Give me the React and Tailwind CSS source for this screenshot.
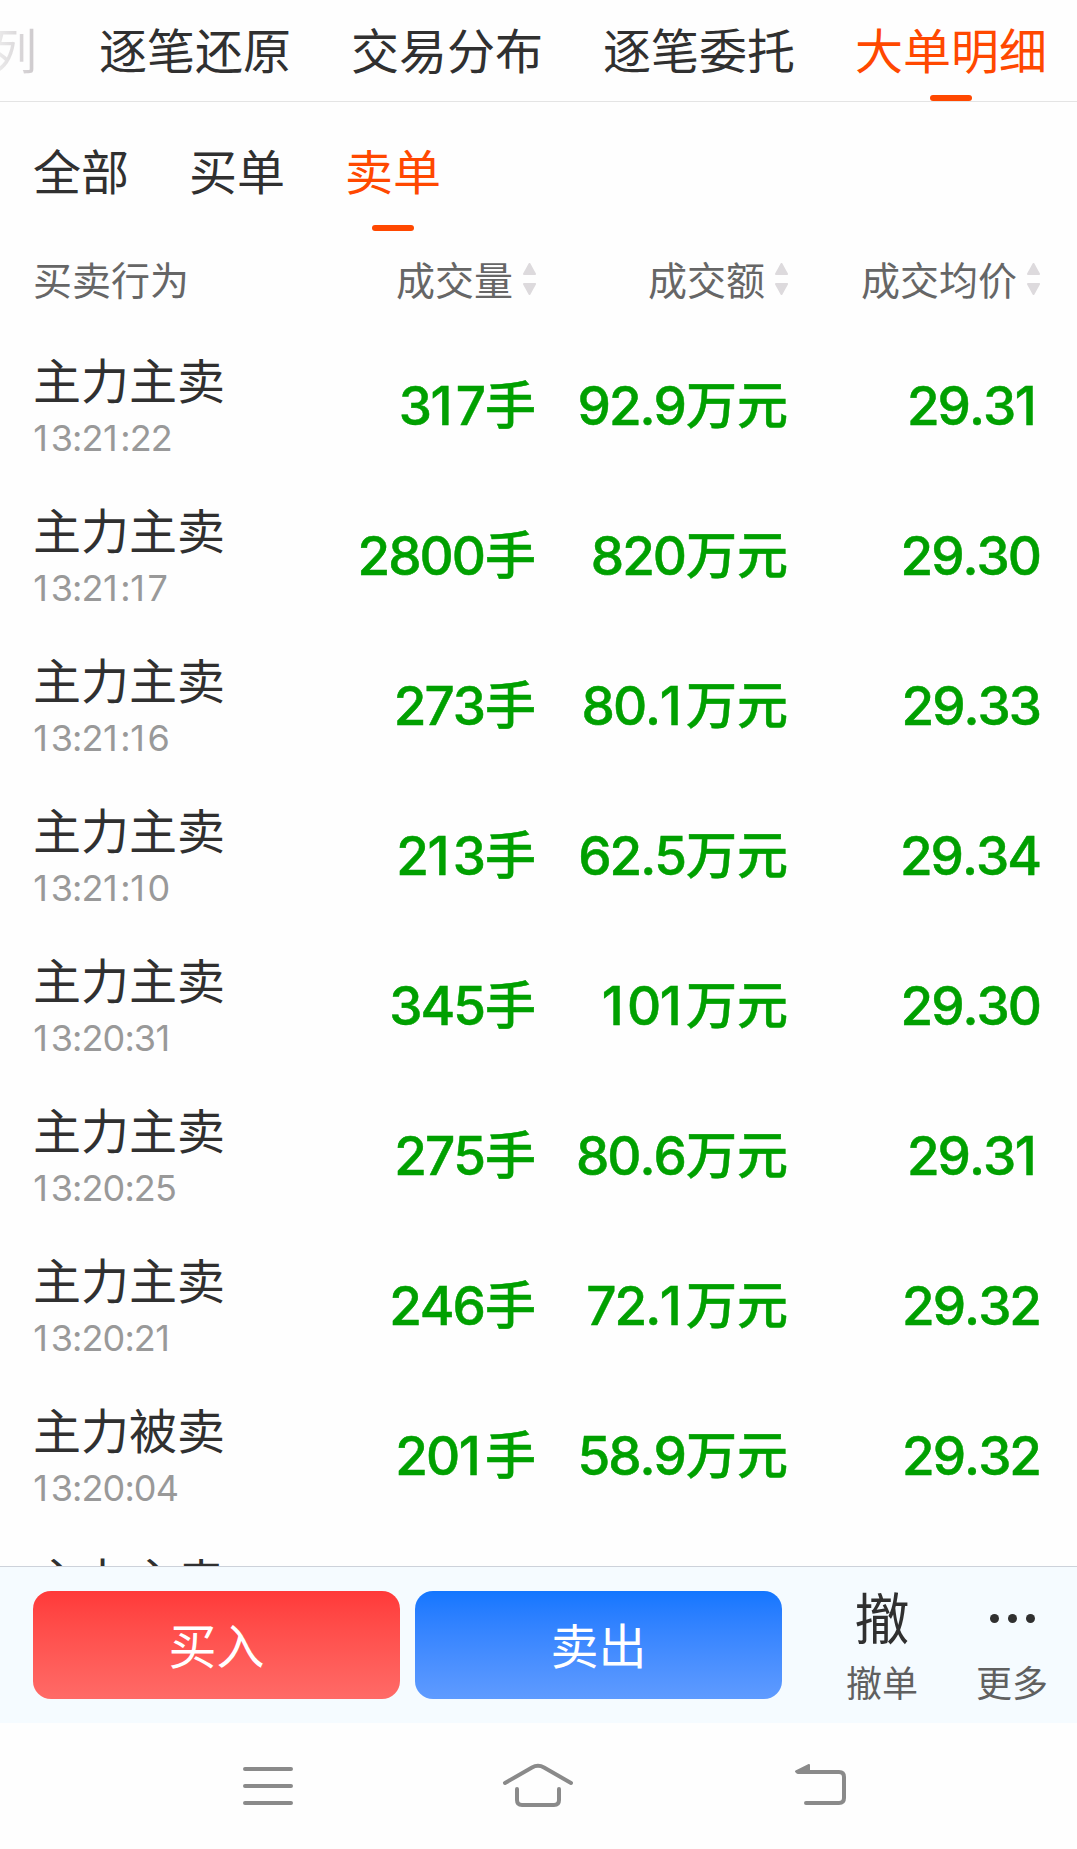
const tabs = ["逐笔还原", "交易分布", "逐笔委托", "大单明细"]

const filters = ["全部", "买单", "卖单"]

const columns = ["成交量", "成交额", "成交均价"]

const orders = [
  { action: "主力主卖", time: "13:21:22", volume: "317", amount: "92.9", price: "29.31" },
  { action: "主力主卖", time: "13:21:17", volume: "2800", amount: "820", price: "29.30" },
  { action: "主力主卖", time: "13:21:16", volume: "273", amount: "80.1", price: "29.33" },
  { action: "主力主卖", time: "13:21:10", volume: "213", amount: "62.5", price: "29.34" },
  { action: "主力主卖", time: "13:20:31", volume: "345", amount: "101", price: "29.30" },
  { action: "主力主卖", time: "13:20:25", volume: "275", amount: "80.6", price: "29.31" },
  { action: "主力主卖", time: "13:20:21", volume: "246", amount: "72.1", price: "29.32" },
  { action: "主力被卖", time: "13:20:04", volume: "201", amount: "58.9", price: "29.32" },
  { action: "主力主卖" },
]

function SortIcon() {
  return (
    <svg
      className="mb-0.5 h-8 w-[13px] shrink-0"
      viewBox="0 0 13 32"
      fill="#dddadd"
      stroke="#dddadd"
      strokeWidth="2"
      strokeLinejoin="round"
    >
      <path d="M6.5 1L12 11H1z" />
      <path d="M6.5 31L12 21H1z" />
    </svg>
  )
}

// Inter's "1" is narrow, give it some room on its right
function Digits({ text }) {
  return text.split(/(1)/).map((part, i) => (
    <span key={i} className={i % 2 ? "mr-[0.1em] ml-[0.01em]" : ""}>
      {part}
    </span>
  ))
}

function Value({ number, unit }) {
  return (
    <div className="flex items-center justify-end font-medium text-[#00a000]">
      <span className="text-[53px] leading-[60px] tracking-[-0.038em] [-webkit-text-stroke:0.5px_#00a000] [font-kerning:none]">
        <Digits text={number} />
      </span>
      {unit && (
        <span className="pl-px text-[51px] leading-[60px] [-webkit-text-stroke:0.5px_#00a000]">
          {unit}
        </span>
      )}
    </div>
  )
}

function OrderRow({ order }) {
  return (
    <div className="grid h-[150px] shrink-0 grid-cols-[270px_233px_252px_252px] pl-[33px]">
      <div>
        <div className="h-[72px] text-5xl leading-[73px] text-[#303030]">
          {order.action}
        </div>
        {order.time && (
          <div className="text-[36px] leading-[42px] tracking-[-0.025em] text-[#999999] [font-kerning:none]">
            <Digits text={order.time} />
          </div>
        )}
      </div>
      {order.time && (
        <>
          <div className="pt-[31px]">
            <Value number={order.volume} unit="手" />
          </div>
          <div className="pt-[31px]">
            <Value number={order.amount} unit="万元" />
          </div>
          <div className="pt-[31px]">
            <Value number={order.price} />
          </div>
        </>
      )}
    </div>
  )
}

function TopTabs() {
  return (
    <nav className="flex h-[102px] shrink-0 justify-end gap-[60px] border-b border-[#e4e4e4] pr-[30px] text-5xl leading-[103px] whitespace-nowrap text-[#303030]">
      <span className="mr-0.5 bg-linear-to-r from-[#f2f2f2] to-[#ccc8cb] bg-clip-text text-transparent">
        列
      </span>
      {tabs.map((tab) =>
        tab === "大单明细" ? (
          <span key={tab} className="relative text-[#ff4800]">
            {tab}
            <i className="absolute bottom-0 left-[75px] h-1.5 w-[42px] rounded-full bg-[#ff4800]" />
          </span>
        ) : (
          <span key={tab}>{tab}</span>
        )
      )}
    </nav>
  )
}

function Filters() {
  return (
    <div className="flex h-[129px] shrink-0 gap-[60px] pl-[33px] text-5xl leading-[142px] text-[#303030]">
      {filters.map((name) =>
        name === "卖单" ? (
          <span key={name} className="relative text-[#ff4800]">
            {name}
            <i className="absolute bottom-0 left-[27px] h-1.5 w-[42px] rounded-full bg-[#ff4800]" />
          </span>
        ) : (
          <span key={name}>{name}</span>
        )
      )}
    </div>
  )
}

function TradeBar() {
  return (
    <div className="flex h-[157px] shrink-0 border-t border-[#cdd2da] bg-[#f5fbff] pl-[33px]">
      <div className="flex gap-[15px] pt-6 text-5xl text-white">
        <button className="h-[108px] w-[367px] rounded-[18px] bg-linear-to-b from-[#ff3939] to-[#ff6a67] pt-[3px]">
          买入
        </button>
        <button className="h-[108px] w-[367px] rounded-[18px] bg-linear-to-b from-[#1276ff] to-[#5f9bff] pt-[3px]">
          卖出
        </button>
      </div>
      <div className="ml-[35px] flex text-center text-[36px] leading-[56px] text-[#606060]">
        <div className="w-[130px]">
          <div className="h-[89px] pt-[12px] text-[55px] leading-[80px] text-[#303030]">撤</div>
          <div>撤单</div>
        </div>
        <div className="w-[130px]">
          <div className="flex h-[89px] items-center justify-center gap-[9px] pt-[13px]">
            <i className="size-[9px] rounded-full bg-[#303030]" />
            <i className="size-[9px] rounded-full bg-[#303030]" />
            <i className="size-[9px] rounded-full bg-[#303030]" />
          </div>
          <div>更多</div>
        </div>
      </div>
    </div>
  )
}

function SystemNav() {
  return (
    <div className="flex h-[126px] shrink-0 items-center pl-[240px] text-[#8a8a8a]">
      <svg
        className="h-[50px] w-14"
        viewBox="0 0 56 50"
        stroke="currentColor"
        strokeWidth="4"
        strokeLinecap="round"
      >
        <path d="M5 8H51M5 25H51M5 42H51" />
      </svg>
      <svg
        className="ml-[204px] h-[50px] w-[76px]"
        viewBox="0 0 76 50"
        fill="none"
        stroke="currentColor"
        strokeWidth="4"
        strokeLinecap="round"
      >
        <path d="M5 22L32 6.5Q38 3 44 6.5L71 22" />
        <path d="M17 28V39Q17 44 22 44H54Q59 44 59 39V28" />
      </svg>
      <svg
        className="ml-[216px] h-[50px] w-[58px]"
        viewBox="0 0 58 50"
        fill="none"
        stroke="currentColor"
        strokeWidth="4"
        strokeLinecap="round"
      >
        <path d="M6 11H47Q52 11 52 16V37Q52 42 47 42H14" />
        <path
          d="M4 10.5L17 4V11H5z"
          fill="currentColor"
          strokeWidth="2"
          strokeLinejoin="round"
        />
      </svg>
    </div>
  )
}

export default function App() {
  return (
    <div className="flex h-[1849px] w-[1077px] flex-col overflow-hidden bg-[#fefefe] font-[Inter,'Noto_Sans_CJK_SC',sans-serif]">
      <TopTabs />
      <Filters />
      <div className="grid h-[114px] shrink-0 grid-cols-[270px_233px_252px_252px] pl-[33px] text-[39px] leading-[100px] text-[#666666]">
        <span>买卖行为</span>
        {columns.map((name) => (
          <div key={name} className="flex h-[98px] items-center justify-end gap-[10px]">
            <span className="pt-px whitespace-nowrap">{name}</span>
            <SortIcon />
          </div>
        ))}
      </div>
      <main className="flex min-h-0 flex-1 flex-col overflow-hidden">
        {orders.map((order, i) => (
          <OrderRow key={i} order={order} />
        ))}
      </main>
      <TradeBar />
      <SystemNav />
    </div>
  )
}
